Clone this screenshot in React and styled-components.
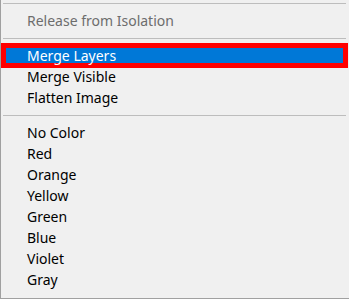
import React from 'react'
import styled, { createGlobalStyle } from 'styled-components'

const GlobalStyle = createGlobalStyle`
  html, body {
    margin: 0;
    padding: 0;
    background: #f0f0f0;
  }
`

const Menu = styled.div`
  box-sizing: border-box;
  width: 349px;
  height: 299px;
  background: #f0f0f0;
  border-left: 1px solid #a0a0a0;
  border-bottom: 1px solid #a0a0a0;
  padding: 3px 3px 0 2px;
  font-family: "Noto Sans", "Open Sans", sans-serif;
  font-size: 14px;
  overflow: hidden;
`

const Separator = styled.div`
  height: 1px;
  background: #bdbdbd;
`

const Group = styled.div`
  padding: 6px 0 7px;
`

const Item = styled.div`
  height: 21px;
  line-height: 21px;
  padding-left: 24px;
  white-space: nowrap;
  color: ${p => (p.$disabled ? '#6d6d6d' : p.$active ? '#fff' : '#000')};
  background: ${p => (p.$active ? '#0078d7' : 'transparent')};
  box-shadow: ${p => (p.$active ? 'inset 0 0 0 3px #ff0000, 0 0 0 2px #ff0000' : 'none')};
`

const colors = ['No Color', 'Red', 'Orange', 'Yellow', 'Green', 'Blue', 'Violet', 'Gray']

export default function App() {
  return (
    <>
      <GlobalStyle />
      <Menu>
        <Separator />
        <Group>
          <Item $disabled>Release from Isolation</Item>
        </Group>
        <Separator />
        <Group>
          <Item $active>Merge Layers</Item>
          <Item>Merge Visible</Item>
          <Item>Flatten Image</Item>
        </Group>
        <Separator />
        <Group>
          {colors.map(c => (
            <Item key={c}>{c}</Item>
          ))}
        </Group>
      </Menu>
    </>
  )
}
